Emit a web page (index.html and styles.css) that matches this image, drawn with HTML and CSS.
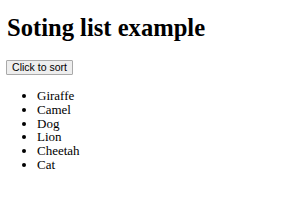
FILE: index.html
```html
<!DOCTYPE html>
<html>
<head>
<meta charset="utf-8">
<link rel="stylesheet" href="styles.css">
</head>
<body>
<h1 class="title">Soting list example</h1>
<button class="sort-btn">Click to sort</button>
<ul class="animals">
<li>Giraffe</li>
<li>Camel</li>
<li>Dog</li>
<li>Lion</li>
<li>Cheetah</li>
<li>Cat</li>
</ul>
</body>
</html>
```
FILE: styles.css
```css
html, body {
  margin: 0;
  padding: 0;
  background: #ffffff;
}
body {
  padding: 14px 6px 0 6px;
  font-family: "Liberation Serif", "Times New Roman", serif;
  color: #000;
}
.title {
  margin: 0 0 18px 1px;
  font-size: 24.6px;
  line-height: 28px;
  font-weight: bold;
}
.sort-btn {
  display: block;
  box-sizing: border-box;
  width: 67px;
  height: 15px;
  margin: 0;
  padding: 0 4px;
  font-family: "Liberation Sans", Arial, sans-serif;
  font-size: 10.5px;
  line-height: 13px;
  color: #000;
  background: #eeeeee;
  border: 1px solid #a9a9a9;
  border-radius: 1px;
}
.animals {
  margin: 14px 0 0 0;
  padding-left: 31px;
  font-size: 13px;
  line-height: 13.8px;
}
```
